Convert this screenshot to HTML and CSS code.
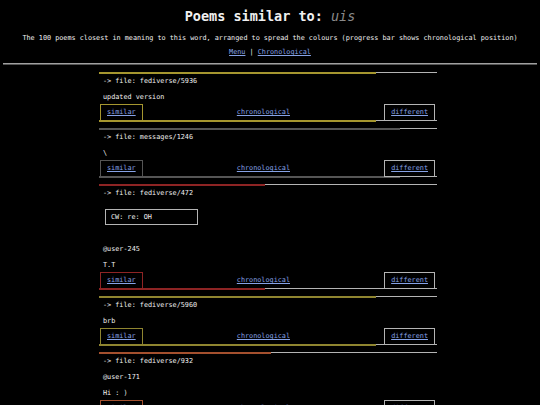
FILE: index.html
```
<!DOCTYPE html>
<html lang="en">
<head>
    <meta charset="UTF-8">
    <meta name="viewport" content="width=device-width, initial-scale=1.0">
    <title>Poems similar to: uis</title>
    <link rel="stylesheet" href="styles.css">
</head>
<body>

    <h1>Poems similar to: <em>uis</em></h1>
    <p class="intro">The 100 poems closest in meaning to this word, arranged to spread the colours (progress bar shows chronological position)</p>
    <p class="menu"><a href="#">Menu</a> | <a href="#">Chronological</a></p>
    <hr>

    <div class="poems">
        <div class="poem" style="--c: #a5962f; --p: 82%">
            <div class="bar"></div>
            <p class="file">-&gt; file: fediverse/5936</p>
            <p>updated version</p>
            <div class="nav">
                <a href="#" class="similar">similar</a>
                <a href="#">chronological</a>
                <a href="#" class="different">different</a>
            </div>
            <div class="bar end"></div>
        </div>

        <div class="poem" style="--c: #555555; --p: 89%">
            <div class="bar"></div>
            <p class="file">-&gt; file: messages/1246</p>
            <p>\</p>
            <div class="nav">
                <a href="#" class="similar">similar</a>
                <a href="#">chronological</a>
                <a href="#" class="different">different</a>
            </div>
            <div class="bar end"></div>
        </div>

        <div class="poem" style="--c: #8e2424; --p: 49%">
            <div class="bar"></div>
            <p class="file">-&gt; file: fediverse/472</p>
            <div class="cw">CW: re: OH</div>
            <p class="after-cw">@user-245</p>
            <p>T.T</p>
            <div class="nav">
                <a href="#" class="similar">similar</a>
                <a href="#">chronological</a>
                <a href="#" class="different">different</a>
            </div>
            <div class="bar end"></div>
        </div>

        <div class="poem" style="--c: #8f8530; --p: 82%">
            <div class="bar"></div>
            <p class="file">-&gt; file: fediverse/5960</p>
            <p>brb</p>
            <div class="nav">
                <a href="#" class="similar">similar</a>
                <a href="#">chronological</a>
                <a href="#" class="different">different</a>
            </div>
            <div class="bar end"></div>
        </div>

        <div class="poem" style="--c: #a4502e; --p: 51%">
            <div class="bar"></div>
            <p class="file">-&gt; file: fediverse/932</p>
            <p>@user-171</p>
            <p>Hi : )</p>
            <div class="nav">
                <a href="#" class="similar">similar</a>
                <a href="#">chronological</a>
                <a href="#" class="different">different</a>
            </div>
            <div class="bar end"></div>
        </div>
    </div>

</body>
</html>
```
FILE: styles.css
```
body {
    font-family: "DejaVu Sans Mono", monospace;
    margin: 0;
    padding: 8px 0 0;
    background-color: #000;
    color: #f0f0f0;
}

a {
    color: #86a2e6;
}

/* En-tete */
h1 {
    margin: 0;
    font-size: 13.5px;
    line-height: 16px;
    text-align: center;
}

h1 em {
    font-weight: normal;
    color: #8a8a8a;
}

.intro {
    margin: 10px 0 0;
    font-size: 6.8px;
    line-height: 9px;
    text-align: center;
}

.menu {
    margin: 5px 0 0;
    font-size: 6.8px;
    line-height: 9px;
    text-align: center;
}

hr {
    margin: 6px 3px 7px;
    border: 0;
    border-top: 1px solid #a0a0a0;
    border-bottom: 1px solid #555;
}

/* Liste des poemes */
.poems {
    width: 338px;
    margin: 0 auto;
    padding-right: 4px;
    font-size: 6.8px;
}

.poem {
    margin-bottom: 6px;
}

.bar {
    height: 2px;
    background: linear-gradient(to right, var(--c) var(--p), transparent var(--p)),
                linear-gradient(#b4b4b4, #b4b4b4) left top / 100% 1px no-repeat;
}

.bar.end {
    margin-top: -1px;
}

.poem p {
    margin: 8px 4px 0;
    line-height: 8px;
}

.poem p.file {
    margin-top: 3px;
}

.poem p.after-cw {
    margin-top: 20px;
}

.cw {
    width: 81px;
    margin: 12px 0 0 6px;
    padding: 0 5px;
    border: 1px solid #b4b4b4;
    line-height: 14px;
}

.nav {
    display: flex;
    justify-content: space-between;
    align-items: center;
    margin: 3px 2px 0 1px;
    height: 17px;
}

.nav a {
    line-height: 15px;
}

.nav .similar,
.nav .different {
    padding: 0 6px;
    border: 1px solid #b4b4b4;
}

.nav .similar {
    border-color: var(--c);
}
```
